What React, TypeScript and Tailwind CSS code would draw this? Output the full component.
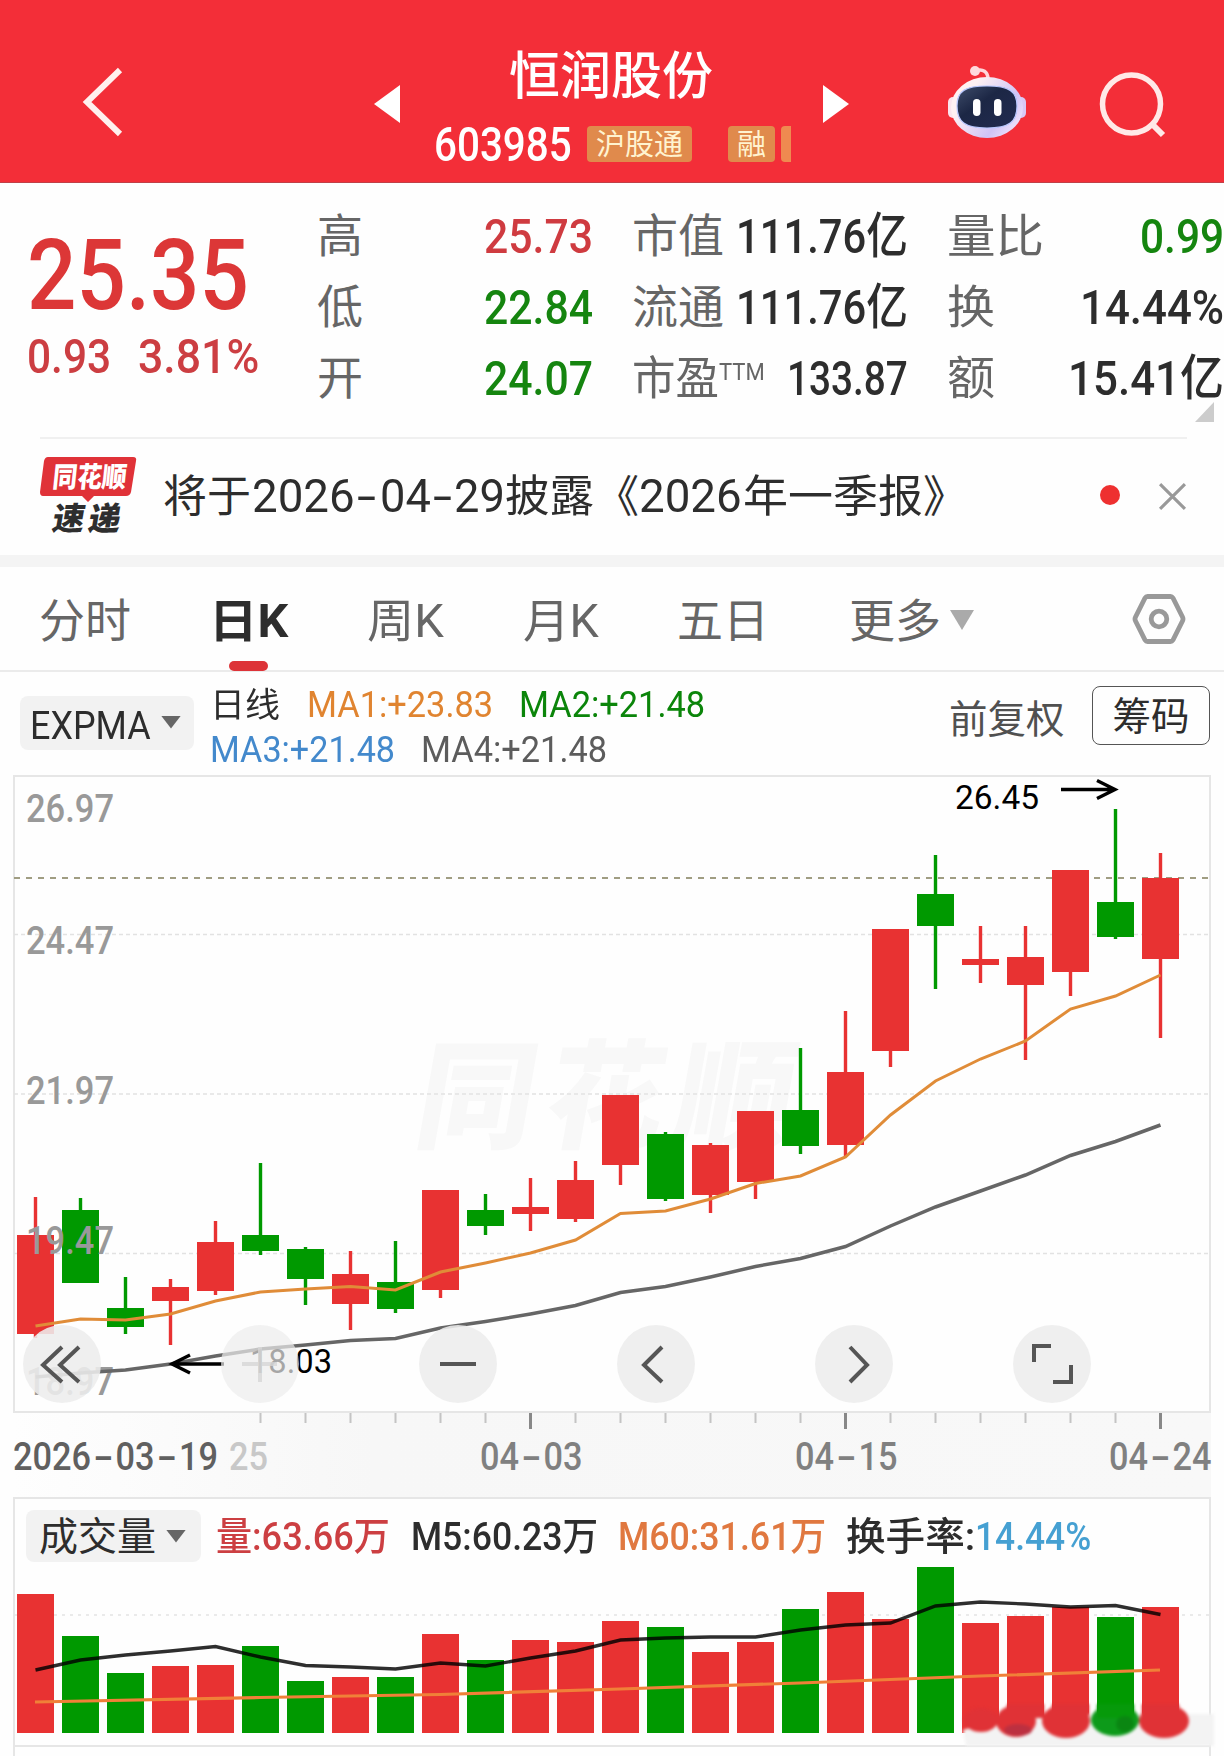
import React, { useLayoutEffect, useRef } from 'react';

type Candle = {
  high: number;
  top: number;
  bottom: number;
  low: number;
  up: boolean;
  ma1: number;
  ma4: number;
  vol: number;
  m5: number;
};

const RED = '#e83232';
const GREEN = '#009900';
const NUM_FONT = 'Roboto, "Noto Sans CJK SC", sans-serif';

// high, body top, body bottom, low, up, ma1, ma4, volume top, volume m5
const rows: [number, number, number, number, number, number, number, number, number][] = [
  [1197, 1235, 1334, 1338, 1, 1326, 1377, 1594, 1670],
  [1198, 1210, 1283, 1283, 0, 1319, 1373, 1636, 1660],
  [1277, 1308, 1327, 1334, 0, 1320, 1370, 1673, 1655],
  [1279, 1287, 1301, 1345, 1, 1314, 1364, 1666, 1651],
  [1221, 1242, 1291, 1295, 1, 1301, 1356, 1665, 1646.5],
  [1163, 1235, 1251, 1255, 0, 1292, 1349, 1646, 1657],
  [1247, 1249, 1279, 1305, 0, 1289, 1345, 1681, 1665.5],
  [1251, 1274, 1304, 1330, 1, 1286.5, 1340.5, 1677, 1667],
  [1241, 1282, 1309, 1313, 0, 1290, 1338.5, 1677, 1669],
  [1190, 1190, 1290, 1298, 1, 1272, 1328, 1634, 1663],
  [1194, 1210, 1226, 1235, 0, 1263, 1321.5, 1660, 1666],
  [1178, 1207, 1214, 1231, 1, 1253, 1314, 1640, 1658],
  [1161, 1180, 1219, 1222, 1, 1240, 1305.5, 1642, 1651],
  [1095, 1095, 1165, 1185, 1, 1213.5, 1292.5, 1621, 1640],
  [1132, 1134, 1199, 1201, 0, 1211, 1286.5, 1627, 1638],
  [1143, 1145, 1195, 1213, 1, 1199, 1277, 1652, 1637],
  [1111, 1111, 1182, 1199, 1, 1183.5, 1266.5, 1642, 1637],
  [1048, 1110, 1146, 1154, 0, 1176, 1258.5, 1609, 1630],
  [1011, 1072, 1145, 1157, 1, 1157, 1246.5, 1592, 1625],
  [929, 929, 1051, 1067, 1, 1115, 1226, 1619, 1623],
  [855, 894, 926, 989, 0, 1081, 1207, 1567, 1606],
  [926, 959, 965, 983, 1, 1059, 1191, 1623, 1602],
  [926, 957, 985, 1060, 1, 1041, 1175, 1616, 1604],
  [870, 870, 972, 996, 1, 1009, 1155.5, 1607, 1607],
  [809, 902, 937, 939, 0, 996, 1141.5, 1617, 1605.5],
  [853, 878, 959, 1038, 1, 975, 1125, 1607, 1614.5],
];

const candles: Candle[] = rows.map(([high, top, bottom, low, up, ma1, ma4, vol, m5]) => ({
  high, top, bottom, low, up: up === 1, ma1, ma4, vol, m5,
}));

const cx = (i: number) => 35.5 + i * 45;
const line = (key: 'ma1' | 'ma4' | 'm5') => candles.map((c, i) => `${cx(i)},${c[key]}`).join(' ');

// Squeezes its text to an exact width, the digits of the app are narrow
const Fit: React.FC<{ w: number; className?: string; children: React.ReactNode }> = ({ w, className = '', children }) => {
  const ref = useRef<HTMLSpanElement>(null);
  useLayoutEffect(() => {
    const el = ref.current;
    if (el) el.style.transform = `scaleX(${w / el.offsetWidth})`;
  }, [w]);
  return (
    <span className={`inline-block shrink-0 whitespace-nowrap font-[Roboto,'Noto_Sans_CJK_SC',sans-serif] leading-none ${className}`} style={{ width: w }}>
      <span ref={ref} className="inline-block origin-left">{children}</span>
    </span>
  );
};

const Header: React.FC = () => (
  <header className="flex h-[183px] items-start border-b border-[#c04048] bg-[#f32e38] text-white">
    <svg className="ml-[80px] mt-[64px] h-[76px] w-[46px]" viewBox="0 0 46 76" fill="none">
      <path d="M40 6 L7 38 L40 70" stroke="#fff0ee" strokeWidth="6" />
    </svg>
    <svg className="ml-[248px] mt-[85px] h-[38px] w-[26px]" viewBox="0 0 26 38">
      <path d="M26 0 V38 L0 19 Z" fill="#fff" />
    </svg>
    <div className="ml-[34px] mt-[45px] w-[358px]">
      <div className="pl-[75px] text-[51px] font-medium leading-[54px]">恒润股份</div>
      <div className="mt-[27px] flex h-[36px] items-center">
        <Fit w={138} className="relative top-px text-[48px] font-medium">603985</Fit>
        <span className="ml-[15px] flex h-[36px] w-[105px] items-center justify-center rounded bg-[#e08a4c] pb-1 text-[29px] leading-none text-[#fff3d0]">沪股通</span>
        <span className="ml-[36px] flex h-[36px] w-[47px] items-center justify-center rounded bg-[#e08a4c] pb-1 text-[29px] leading-none text-[#fff3d0]">融</span>
        <span className="ml-[6px] h-[36px] w-[10px] rounded-l bg-[#ef8a50]" />
      </div>
    </div>
    <svg className="ml-[31px] mt-[85px] h-[38px] w-[26px]" viewBox="0 0 26 38">
      <path d="M0 0 V38 L26 19 Z" fill="#fff" />
    </svg>
    <svg className="ml-[98px] mt-[64px] h-[76px] w-[80px]" viewBox="0 0 80 76">
      <defs>
        <linearGradient id="shell" x1="0" y1="0" x2="1" y2="0.6">
          <stop offset="0.3" stopColor="#fff1f3" />
          <stop offset="0.8" stopColor="#cfc4f6" />
          <stop offset="1" stopColor="#e9dcfa" />
        </linearGradient>
        <linearGradient id="visor" x1="0" y1="0" x2="1" y2="1">
          <stop offset="0" stopColor="#3f4d6b" />
          <stop offset="0.4" stopColor="#1c2745" />
          <stop offset="1" stopColor="#222b50" />
        </linearGradient>
      </defs>
      <path d="M28 7 C36 4 41 8 41 15" fill="none" stroke="#ffd6da" strokeWidth="3.5" />
      <circle cx="28" cy="7" r="5" fill="#ffd9dd" />
      <rect x="1" y="33" width="14" height="21" rx="5" fill="#fbe4ee" />
      <rect x="65" y="33" width="14" height="21" rx="5" fill="#d9c8f5" />
      <ellipse cx="40" cy="43.5" rx="36" ry="30.5" fill="url(#shell)" />
      <path d="M40 22 C62 22 70 27 70 42 C70 58 62 64 40 64 C18 64 10 58 10 42 C10 27 18 22 40 22 Z" fill="url(#visor)" stroke="#b9c8ff" strokeWidth="1.2" />
      <rect x="26" y="35" width="7.5" height="17" rx="3.7" fill="#fff" />
      <rect x="47" y="35" width="7.5" height="17" rx="3.7" fill="#fff" />
    </svg>
    <svg className="ml-[71px] mt-[68px] h-[72px] w-[72px]" viewBox="0 0 72 72" fill="none" stroke="#ffe9e7" strokeWidth="5.5">
      <circle cx="33.5" cy="36" r="29" />
      <path d="M53 55 L65 67" strokeWidth="6" />
    </svg>
  </header>
);

const QuoteCell: React.FC<{ label: React.ReactNode; value: string; w: number; color: string }> = ({ label, value, w, color }) => (
  <div className="flex h-[71px] items-center justify-between text-[46px] leading-none text-[#666]">
    <span className="flex whitespace-nowrap pb-[10px]">{label}</span>
    <Fit w={w} className={`text-[49px] font-medium ${color}`}>{value}</Fit>
  </div>
);

const Quote: React.FC = () => (
  <section className="flex h-[254px] pt-[18px]">
    <div className="w-[317px] pl-[27px] pt-[26px] text-[#dc3737]">
      <Fit w={222} className="text-[98px] font-medium">25.35</Fit>
      <div className="mt-[7px] flex gap-[27px] text-[#cc3e42]">
        <Fit w={84} className="text-[49px] font-medium">0.93</Fit>
        <Fit w={121} className="text-[49px] font-medium">3.81%</Fit>
      </div>
    </div>
    <div className="w-[276px]">
      <QuoteCell label="高" value="25.73" w={109} color="text-[#cf3b40]" />
      <QuoteCell label="低" value="22.84" w={109} color="text-[#15850f]" />
      <QuoteCell label="开" value="24.07" w={109} color="text-[#15850f]" />
    </div>
    <div className="ml-[39px] w-[276px]">
      <QuoteCell label="市值" value="111.76亿" w={172} color="text-[#2d2d2d]" />
      <QuoteCell label="流通" value="111.76亿" w={172} color="text-[#2d2d2d]" />
      <QuoteCell label={<><Fit w={87} className="relative top-[4px]">市盈</Fit><Fit w={46} className="mt-[9px] text-[24px]">TTM</Fit></>} value="133.87" w={121} color="text-[#2d2d2d]" />
    </div>
    <div className="ml-[39px] w-[277px]">
      <QuoteCell label={<Fit w={97} className="relative top-[4px]">量比</Fit>} value="0.99" w={84} color="text-[#15850f]" />
      <QuoteCell label={<Fit w={48} className="relative top-[4px]">换</Fit>} value="14.44%" w={144} color="text-[#2d2d2d]" />
      <QuoteCell label={<Fit w={48} className="relative top-[4px]">额</Fit>} value="15.41亿" w={156} color="text-[#2d2d2d]" />
      <div className="-mt-[12px] ml-[248px] h-[20px] w-[19px] bg-[#ccc] [clip-path:polygon(100%_0,100%_100%,0_100%)]" />
    </div>
  </section>
);

const News: React.FC = () => (
  <section className="ml-[40px] mr-[37px] flex h-[118px] items-start border-t-2 border-[#f0f0f0]">
    <div className="mt-[17px] w-[96px]">
      <svg className="h-[82px] w-[98px] overflow-visible" viewBox="0 0 98 82">
        <path d="M8 1 H93 Q97 1 96 5 L91 36 Q90 40 86 40 H54 L48 46 L42 40 H3 Q0 40 0 36 L4 5 Q5 1 8 1 Z" fill="#e03238" />
        <g fontFamily='"Noto Sans CJK SC", sans-serif' fontWeight="900">
          <text x="15" y="31" fontSize="28" fill="#fff" textLength="74" lengthAdjust="spacingAndGlyphs" transform="skewX(-6)">同花顺</text>
          <text x="24" y="74" fontSize="32" fill="#2e2e2e" textLength="68" transform="skewX(-10)">速递</text>
        </g>
      </svg>
    </div>
    <p className="ml-[27px] mt-[36px] flex h-[44px] items-start text-[44px] text-[#2d2d2d]">
      <Fit w={88}>将于</Fit>
      <Fit w={103} className="-mt-[3px] ml-px text-[47px]">2026</Fit>
      <Fit w={19} className="-mt-[3px] ml-[2px] text-[47px]">-</Fit>
      <Fit w={51} className="-mt-[3px] ml-[4px] text-[47px]">04</Fit>
      <Fit w={19} className="-mt-[3px] ml-[2px] text-[47px]">-</Fit>
      <Fit w={51} className="-mt-[3px] ml-[2px] text-[47px]">29</Fit>
      <Fit w={89}>披露</Fit>
      <Fit w={44} className="ml-px">《</Fit>
      <Fit w={103} className="-mt-[3px] text-[47px]">2026</Fit>
      <Fit w={180} className="ml-px">年一季报</Fit>
      <Fit w={44}>》</Fit>
    </p>
    <span className="ml-auto mt-[46px] h-[20px] w-[20px] rounded-full bg-[#ee3030]" />
    <svg className="ml-[38px] mt-[43px] h-[29px] w-[29px]" viewBox="0 0 28 28" stroke="#999" strokeWidth="3">
      <path d="M2 2 L26 26 M26 2 L2 26" />
    </svg>
  </section>
);

const Tabs: React.FC = () => (
  <nav className="flex h-[105px] items-start border-b-2 border-[#ebebeb] pt-[28px] text-[46px] leading-[44px] text-[#666]">
    <span className="ml-[39px] w-[170px]">分时</span>
    <div className="flex w-[158px] flex-col pt-[4px]">
      <Fit w={79} className="!leading-[44px] font-bold text-[#2d2d2d]">日K</Fit>
      <span className="ml-[20px] mt-[18px] h-[10px] w-[39px] rounded-full bg-[#dd3338]" />
    </div>
    <Fit w={77} className="!leading-[44px] pt-[4px]">周K</Fit>
    <Fit w={76} className="!leading-[44px] ml-[79px] pt-[4px]">月K</Fit>
    <span className="ml-[78px] w-[172px]">五日</span>
    <span className="w-[93px] whitespace-nowrap">更多</span>
    <span className="ml-[8px] mt-[15px] h-[20px] w-[24px] bg-[#aaa] [clip-path:polygon(0_0,100%_0,50%_100%)]" />
    <svg className="ml-[158px] -mt-[2px] h-[52px] w-[54px]" viewBox="0 0 54 52" fill="none" stroke="#999" strokeWidth="4.8" strokeLinejoin="round">
      <path d="M15.5 3.5 H38.5 Q40 3.5 41 5 L50.5 24 Q51.5 26 50.5 28 L41 47 Q40 48.5 38.5 48.5 H15.5 Q14 48.5 13 47 L3.5 28 Q2.5 26 3.5 24 L13 5 Q14 3.5 15.5 3.5 Z" />
      <circle cx="27" cy="26" r="7.8" />
    </svg>
  </nav>
);

const Indicators: React.FC = () => (
  <section className="flex h-[103px] items-start">
    <div className="ml-[20px] mt-[24px] flex h-[54px] w-[174px] items-center rounded-lg bg-[#f2f2f2] pl-[10px]">
      <Fit w={121} className="pt-[5px] text-[38px] text-[#2d2d2d]">EXPMA</Fit>
      <span className="ml-[10px] -mt-[2px] h-[13px] w-[20px] bg-[#666] [clip-path:polygon(0_0,100%_0,50%_100%)]" />
    </div>
    <div className="ml-[16px] mt-[11px] w-[500px]">
      <div className="flex h-[44px] items-center text-[36px]">
        <Fit w={70} className="text-[34px] text-[#2d2d2d]">日线</Fit>
        <Fit w={186} className="ml-[27px] text-[#e08430]">MA1:+23.83</Fit>
        <Fit w={186} className="ml-[26px] text-[#0b850a]">MA2:+21.48</Fit>
      </div>
      <div className="flex h-[45px] items-center text-[36px]">
        <Fit w={185} className="text-[#4389cc]">MA3:+21.48</Fit>
        <Fit w={186} className="ml-[26px] text-[#5c5c5c]">MA4:+21.48</Fit>
      </div>
    </div>
    <span className="ml-[239px] mt-[25px] w-[115px] whitespace-nowrap text-[38.5px] leading-[38px] text-[#505050]">前复权</span>
    <span className="ml-[28px] mt-[14px] flex h-[59px] w-[118px] items-center justify-center rounded-lg border-[1.5px] border-[#555] pb-[4px] text-[38.5px] leading-none text-[#2d2d2d]">筹码</span>
  </section>
);

const yLabels = [
  { text: '26.97', y: 821.5 },
  { text: '24.47', y: 953.5 },
  { text: '21.97', y: 1103.5 },
  { text: '19.47', y: 1253.5 },
  { text: '18.97', y: 1394.5 },
];

const controls = [
  'M62 1347 L43 1365 L62 1382 M79 1347 L60 1365 L79 1382',
  'M242 1364 H277 M260 1347 V1382',
  'M440 1364 H476',
  'M662 1347 L644 1365 L662 1382',
  'M850 1347 L867 1365 L850 1382',
  'M1034 1362 V1346 H1051 M1053 1382 H1071 V1365',
];

// Date under the axis: 19.5px per digit, 24.5px for the dash
const DateLabel: React.FC<{ x: number; text: string; fill?: string }> = ({ x, text, fill }) => {
  let left = x;
  return (
    <g fill={fill}>
      {text.split('-').map((part, i) => {
        if (i > 0) left += 24.5;
        const start = left;
        left += part.length * 19.5;
        return (
          <React.Fragment key={i}>
            {i > 0 && <text x={start - 22} y="1470" textLength="20" lengthAdjust="spacingAndGlyphs">-</text>}
            <text x={start} y="1470" textLength={part.length * 19.5} lengthAdjust="spacingAndGlyphs">{part}</text>
          </React.Fragment>
        );
      })}
    </g>
  );
};

const KLine: React.FC = () => (
  <svg className="block h-[722px] w-full" viewBox="0 775 1224 722" fontFamily={NUM_FONT}>
    <defs>
      <linearGradient id="axis" x1="0" y1="0" x2="1" y2="0">
        <stop offset="0" stopColor="#fefefe" />
        <stop offset="0.3" stopColor="#f7f7f7" />
        <stop offset="1" stopColor="#f8f8f8" />
      </linearGradient>
    </defs>
    <rect x="13" y="1412" width="1198" height="86" fill="url(#axis)" />
    <rect x="14" y="776" width="1196" height="636" fill="none" stroke="#e6e6e6" strokeWidth="2" />
    <text x="410" y="1139" fontSize="118" fontWeight="900" fill="#f8f8f8" fontFamily='"Noto Sans CJK SC", sans-serif' textLength="376" transform="translate(202 0) skewX(-10)">同花顺</text>

    <g stroke="#e2e2e2" strokeWidth="1.5" strokeDasharray="4 3">
      <path d="M14 934.5 H1210 M14 1094 H1210 M14 1253.5 H1210" />
    </g>
    <path d="M14 878 H1210" stroke="#a09d82" strokeWidth="2" strokeDasharray="6 6" />

    {candles.map((c, i) => (
      <g key={i} fill={c.up ? RED : GREEN}>
        <rect x={cx(i) - 1.7} y={c.high} width="3.4" height={c.low - c.high} />
        <rect x={cx(i) - 18.5} y={c.top} width="37" height={c.bottom - c.top} />
      </g>
    ))}

    <g fontSize="39" fontWeight="500" fill="#999">
      {yLabels.map((l) => (
        <text key={l.text} x="26" y={l.y} textLength="88" lengthAdjust="spacingAndGlyphs">{l.text}</text>
      ))}
    </g>

    <polyline points={line('ma4')} fill="none" stroke="#666" strokeWidth="3.5" />
    <polyline points={line('ma1')} fill="none" stroke="#e08c38" strokeWidth="3" />

    <g fontSize="34" fill="#000">
      <text x="955" y="809" textLength="84" lengthAdjust="spacingAndGlyphs">26.45</text>
      <text x="250" y="1373" textLength="82" lengthAdjust="spacingAndGlyphs">18.03</text>
    </g>
    <g stroke="#000" strokeWidth="3.4" fill="none">
      <path d="M1061 789.5 H1115 M1097 780.5 L1115 789.5 L1097 798.5" />
      <path d="M224 1364 H173 M190 1355 L172 1364 L190 1373" />
    </g>

    {controls.map((d, i) => (
      <g key={i}>
        <circle cx={62 + i * 198} cy="1364" r="39" fill="#ededed" fillOpacity={i === 1 ? 0.7 : 0.88} />
        <path d={d} fill="none" stroke={i === 1 ? '#d6d6d6' : '#555'} strokeWidth="4" strokeOpacity={i === 1 ? 0.8 : 1} />
      </g>
    ))}

    {candles.map((_, i) => {
      if (i < 5) return null;
      const major = i === 11 || i === 18 || i === 25;
      return <rect key={i} x={cx(i) - (major ? 1.5 : 1)} y="1413" width={major ? 3 : 2} height={major ? 16 : 10} fill={major ? '#888' : '#c4c4c4'} />;
    })}

    <g fontSize="39" fontWeight="500" fill="#808080">
      <DateLabel x={13} text="2026-03-19" fill="#606060" />
      <DateLabel x={229} text="25" fill="#c8c8c8" />
      <DateLabel x={480} text="04-03" />
      <DateLabel x={795} text="04-15" />
      <DateLabel x={1109} text="04-24" />
    </g>
  </svg>
);

const Volume: React.FC = () => (
  <section className="mx-[13px] h-[251px] border-x-2 border-t-2 border-[#e6e6e6]">
    <div className="flex h-[70px] items-start pl-[11px] pt-[11px]">
      <div className="flex h-[52px] w-[175px] items-center rounded-lg bg-[#f2f2f2] pl-[13px]">
        <span className="pb-[5px] text-[39px] leading-none text-[#2d2d2d]">成交量</span>
        <span className="ml-[10px] h-[13px] w-[20px] bg-[#666] [clip-path:polygon(0_0,100%_0,50%_100%)]" />
      </div>
      <div className="flex pt-[8px] text-[39px] font-medium">
        <Fit w={174} className="ml-[15px] text-[#cc3f42]">量:63.66万</Fit>
        <Fit w={187} className="ml-[21px] text-[#2d2d2d]">M5:60.23万</Fit>
        <Fit w={208} className="ml-[20px] text-[#e07840]">M60:31.61万</Fit>
        <Fit w={129} className="ml-[20px] text-[#2d2d2d]">换手率:</Fit>
        <Fit w={116} className="text-[#45a0d2]">14.44%</Fit>
      </div>
    </div>
    <svg className="-ml-[15px] block h-[179px] w-[1224px]" viewBox="0 1569 1224 179" overflow="visible">
      <path d="M14 1615 H1210" stroke="#e4e4e4" strokeWidth="1.5" strokeDasharray="3 5" />
      {candles.map((c, i) => (
        <rect key={i} x={cx(i) - 18.5} y={c.vol} width="37" height={1733 - c.vol} fill={c.up ? RED : GREEN} />
      ))}
      <polyline points={line('m5')} fill="none" stroke="#000" strokeOpacity="0.82" strokeWidth="3.4" />
      <polyline points="35,1702 260,1697.5 440,1694.5 620,1689 800,1683 980,1676 1160,1670" fill="none" stroke="#f08038" strokeWidth="3.2" />
      <path d="M13 1746 H1211" stroke="#e6e6e6" strokeWidth="2" />
      {/* smeared patch over the last bars */}
      <g style={{ filter: 'blur(1.6px)' }}>
        <path d="M963 1730 L990 1722 L1010 1714 H1214 V1746 H966 Z" fill="#f3f3f3" />
        <g fill="#e03236">
          <ellipse cx="981" cy="1720" rx="17" ry="12" />
          <ellipse cx="1016" cy="1721" rx="20" ry="16" />
          <ellipse cx="1066" cy="1721" rx="24" ry="17" />
          <ellipse cx="1164" cy="1721" rx="25" ry="17" />
          <rect x="1007" y="1704" width="37" height="14" />
          <rect x="1052" y="1704" width="37" height="14" />
          <rect x="1142" y="1704" width="37" height="14" />
        </g>
        <ellipse cx="1115" cy="1720" rx="24" ry="16" fill="#0d9a1a" />
        <rect x="1097" y="1704" width="37" height="14" fill="#069a0a" />
        <ellipse cx="1018" cy="1730" rx="14" ry="6" fill="#bc3040" />
        <ellipse cx="1125" cy="1724" rx="9" ry="8" fill="#0a8612" />
      </g>
    </svg>
  </section>
);

const App: React.FC = () => (
  <div className="h-[1756px] w-[1224px] overflow-hidden bg-[#fefefe] font-['Noto_Sans_CJK_SC',sans-serif]">
    <Header />
    <Quote />
    <News />
    <div className="h-[12px] bg-[#f4f4f4]" />
    <Tabs />
    <Indicators />
    <KLine />
    <Volume />
    <div className="mx-[13px] h-[10px] border-x-2 border-[#e6e6e6]" />
  </div>
);

export default App;
